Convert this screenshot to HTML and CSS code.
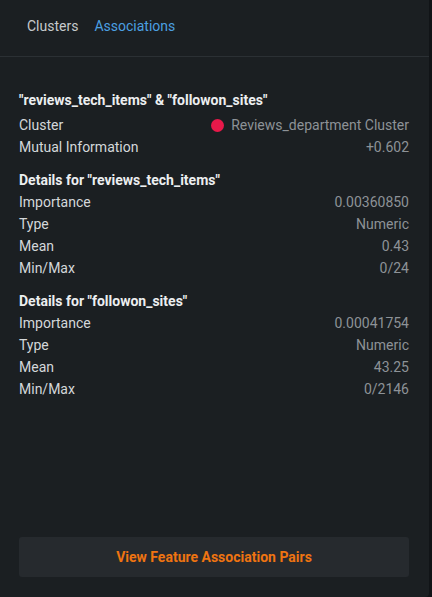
FILE: index.html
```html
<!DOCTYPE html>
<html>
<head>
<meta charset="utf-8">
<link rel="stylesheet" href="styles.css">
</head>
<body>
<div class="shell">
  <div class="panel">
    <nav class="tabs">
      <span class="tab">Clusters</span>
      <span class="tab active">Associations</span>
    </nav>
    <div class="content">
      <section class="group pair">
        <h3 class="heading">"reviews_tech_items" &amp; "followon_sites"</h3>
        <div class="row"><span class="label">Cluster</span><span class="value"><span class="dot"></span>Reviews_department Cluster</span></div>
        <div class="row"><span class="label">Mutual Information</span><span class="value">+0.602</span></div>
      </section>
      <section class="group">
        <h3 class="heading">Details for "reviews_tech_items"</h3>
        <div class="row"><span class="label">Importance</span><span class="value">0.00360850</span></div>
        <div class="row"><span class="label">Type</span><span class="value">Numeric</span></div>
        <div class="row"><span class="label">Mean</span><span class="value">0.43</span></div>
        <div class="row"><span class="label">Min/Max</span><span class="value">0/24</span></div>
      </section>
      <section class="group">
        <h3 class="heading">Details for "followon_sites"</h3>
        <div class="row"><span class="label">Importance</span><span class="value">0.00041754</span></div>
        <div class="row"><span class="label">Type</span><span class="value">Numeric</span></div>
        <div class="row"><span class="label">Mean</span><span class="value">43.25</span></div>
        <div class="row"><span class="label">Min/Max</span><span class="value">0/2146</span></div>
      </section>
    </div>
    <div class="footer">
      <button class="btn">View Feature Association Pairs</button>
    </div>
  </div>
</div>
</body>
</html>
```

FILE: styles.css
```css
* { box-sizing: border-box; }
html, body { margin: 0; padding: 0; }
body {
  background: #111417;
  font-family: Roboto, "Liberation Sans", sans-serif;
  width: 432px;
  height: 597px;
  overflow: hidden;
}
.shell { display: flex; height: 597px; }
.panel {
  width: 429px;
  height: 597px;
  background: #1b1f22;
  border-bottom-right-radius: 4px;
  display: flex;
  flex-direction: column;
}
.tabs {
  height: 57px;
  border-bottom: 1px solid #2b3034;
  display: flex;
  align-items: flex-start;
  padding: 17px 0 0 27px;
  gap: 16px;
}
.tab {
  font-size: 14px;
  line-height: 18px;
  color: #c6c9cc;
}
.tab.active { color: #4b9fe1; }
.content {
  flex: 1;
  padding: 32px 20px 0 19px;
}
.group { margin-bottom: 11px; }
.heading {
  margin: 0;
  font-size: 14px;
  font-weight: 700;
  color: #eceef0;
  line-height: 22px;
}
.pair .heading { margin-bottom: 3px; }
.row {
  display: flex;
  justify-content: space-between;
  align-items: center;
  height: 22px;
  font-size: 14px;
}
.label { color: #d4d7da; }
.value {
  color: #8d9297;
  display: flex;
  align-items: center;
}
.dot {
  width: 13px;
  height: 13px;
  border-radius: 50%;
  background: #e8194a;
  margin-right: 7px;
}
.footer { padding: 0 20px 20px 19px; }
.btn {
  width: 100%;
  height: 40px;
  border: none;
  border-radius: 3px;
  background: #262a2e;
  color: #ef7411;
  font-family: Roboto, "Liberation Sans", sans-serif;
  font-size: 14px;
  font-weight: 700;
  padding: 0;
}
```
